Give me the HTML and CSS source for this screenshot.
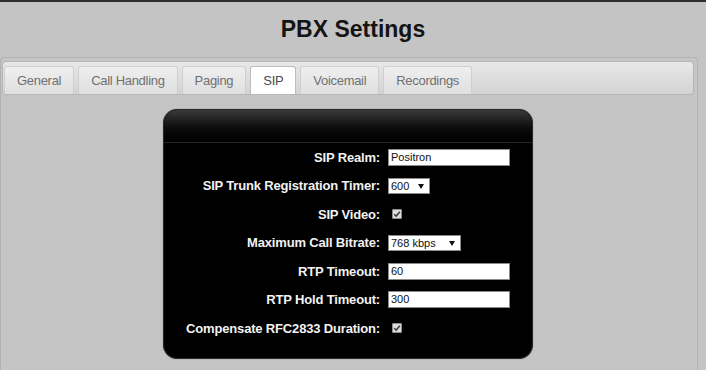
FILE: index.html
```html
<!DOCTYPE html>
<html>
<head>
<meta charset="utf-8">
<title>PBX Settings</title>
<link rel="stylesheet" href="styles.css">
</head>
<body>
<h1 class="title">PBX Settings</h1>
<div class="panel">
  <ul class="tabs">
    <li class="tab">General</li>
    <li class="tab">Call Handling</li>
    <li class="tab">Paging</li>
    <li class="tab active">SIP</li>
    <li class="tab">Voicemail</li>
    <li class="tab">Recordings</li>
  </ul>
  <div class="box">
    <div class="box-head"></div>
    <div class="form">
      <div class="lbl">SIP Realm:</div>
      <div class="val"><span class="field">Positron</span></div>

      <div class="lbl">SIP Trunk Registration Timer:</div>
      <div class="val"><span class="field select w42">600</span></div>

      <div class="lbl">SIP Video:</div>
      <div class="val"><span class="check"><svg viewBox="0 0 10 10" width="8" height="8"><path d="M1.5 5.2 L4 7.6 L8.6 2.2" fill="none" stroke="#3a3a3a" stroke-width="1.8"/></svg></span></div>

      <div class="lbl">Maximum Call Bitrate:</div>
      <div class="val"><span class="field select w73">768 kbps</span></div>

      <div class="lbl">RTP Timeout:</div>
      <div class="val"><span class="field">60</span></div>

      <div class="lbl">RTP Hold Timeout:</div>
      <div class="val"><span class="field">300</span></div>

      <div class="lbl">Compensate RFC2833 Duration:</div>
      <div class="val"><span class="check"><svg viewBox="0 0 10 10" width="8" height="8"><path d="M1.5 5.2 L4 7.6 L8.6 2.2" fill="none" stroke="#3a3a3a" stroke-width="1.8"/></svg></span></div>
    </div>
  </div>
</div>
</body>
</html>
```
FILE: styles.css
```css
html, body {
  margin: 0;
  padding: 0;
}
body {
  background: #c4c4c4;
  border-top: 2px solid #2e2e2e;
  font-family: "Liberation Sans", Arial, sans-serif;
  height: 368px;
  overflow: hidden;
}
.title {
  margin: 14px 0 15px;
  font-size: 23px;
  line-height: 26px;
  font-weight: bold;
  text-align: center;
  color: #141414;
}
.panel {
  margin: 0 8px 0 0;
  border: 1px solid #b2b2b2;
  border-bottom: none;
  border-radius: 4px 4px 0 0;
  background: #c5c5c5;
  padding: 3px 3px 0 1px;
  height: 320px;
  box-sizing: border-box;
}
.tabs {
  list-style: none;
  margin: 0;
  padding: 4px 0 0 1px;
  height: 34px;
  box-sizing: border-box;
  display: flex;
  align-items: flex-end;
  border: 1px solid #b6b6b6;
  border-radius: 4px;
  background: linear-gradient(#e8e8e8, #d3d3d3);
}
.tab {
  height: 28px;
  box-sizing: border-box;
  padding: 0 12px;
  margin-right: 4px;
  line-height: 27px;
  font-size: 13px;
  letter-spacing: -0.3px;
  color: #707070;
  border: 1px solid #cfcfcf;
  border-bottom: none;
  border-radius: 3px 3px 0 0;
  background: linear-gradient(#efefef, #dfdfdf);
}
.tab.active {
  background: #ffffff;
  border-color: #bdbdbd;
  color: #4a4a4a;
}
.box {
  width: 370px;
  height: 250px;
  box-sizing: border-box;
  margin: 14px auto 0;
  background: #000;
  border: 1px solid #2a2a2a;
  border-radius: 14px;
  overflow: hidden;
  box-shadow: 0 0 1px #555;
}
.box-head {
  height: 32px;
  background: linear-gradient(#3a3a3a, #0c0c0c 55%, #000);
  border-bottom: 1px solid #262626;
}
.form {
  display: grid;
  grid-template-columns: 216px 1fr;
  grid-auto-rows: 28.5px;
  column-gap: 8px;
  align-items: center;
}
.lbl {
  text-align: right;
  font-size: 13px;
  letter-spacing: -0.17px;
  font-weight: bold;
  color: #f2f2f2;
  white-space: nowrap;
}
.val {
  display: flex;
  align-items: center;
}
.field {
  position: relative;
  display: block;
  width: 122px;
  height: 17px;
  box-sizing: border-box;
  border: 1px solid #8a8a8a;
  background: #fff;
  font-size: 11px;
  line-height: 15px;
  color: #111;
  padding: 0 2px;
}
.select {
  height: 16px;
  line-height: 14px;
}
.w42 { width: 42px; }
.w73 { width: 73px; }
.select::after {
  content: "";
  position: absolute;
  right: 5px;
  top: 5px;
  border-left: 3px solid transparent;
  border-right: 3px solid transparent;
  border-top: 5px solid #111;
}
.check {
  display: flex;
  align-items: center;
  justify-content: center;
  margin-left: 4px;
  width: 10px;
  height: 10px;
  box-sizing: border-box;
  border: 1px solid #8c8c8c;
  background: #dcdcdc;
  border-radius: 1px;
}
```
